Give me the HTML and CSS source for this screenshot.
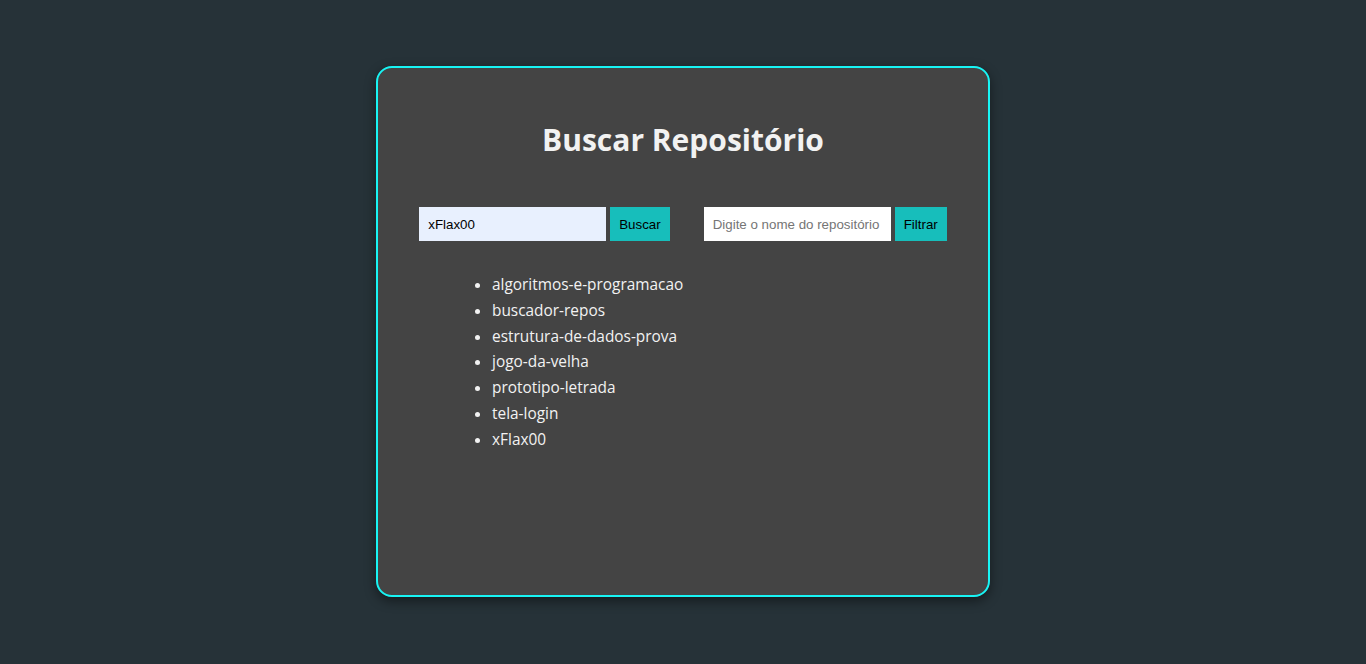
FILE: index.html
```html
<!DOCTYPE html>
<html lang="pt-BR">
<head>
<meta charset="utf-8">
<title>Buscar Repositório</title>
<link rel="stylesheet" href="styles.css">
</head>
<body>
<main class="card">
  <h1 class="title">Buscar Repositório</h1>
  <div class="controls">
    <div class="group">
      <input class="field field-filled" type="text" value="xFlax00">
      <button class="btn">Buscar</button>
    </div>
    <div class="group">
      <input class="field" type="text" placeholder="Digite o nome do repositório">
      <button class="btn">Filtrar</button>
    </div>
  </div>
  <ul class="repos">
    <li>algoritmos-e-programacao</li>
    <li>buscador-repos</li>
    <li>estrutura-de-dados-prova</li>
    <li>jogo-da-velha</li>
    <li>prototipo-letrada</li>
    <li>tela-login</li>
    <li>xFlax00</li>
  </ul>
</main>
</body>
</html>
```
FILE: styles.css
```css
html, body {
  margin: 0;
  padding: 0;
}
body {
  background: #263238;
  min-height: 664px;
  font-family: "Open Sans", "Noto Sans", sans-serif;
  display: flex;
  justify-content: center;
  align-items: flex-start;
}
.card {
  box-sizing: border-box;
  margin-top: 66px;
  width: 614px;
  height: 531px;
  background: #444444;
  border: 2px solid #18f4f4;
  border-radius: 16px;
  box-shadow: 0 4px 12px rgba(0, 0, 0, 0.45);
  padding: 52px 40px 40px;
}
.title {
  margin: 0;
  text-align: center;
  color: #f2f2f2;
  font-size: 30px;
  font-weight: 700;
  line-height: 40px;
  letter-spacing: 0;
}
.controls {
  margin-top: 47px;
  display: flex;
  justify-content: center;
  gap: 34px;
}
.group {
  display: flex;
  gap: 4px;
}
.field {
  box-sizing: border-box;
  width: 187px;
  height: 34px;
  border: none;
  padding: 0 9px;
  font-family: "Liberation Sans", Arial, sans-serif;
  font-size: 13.33px;
  color: #000;
  background: #ffffff;
  outline: none;
}
.field::placeholder {
  color: #757575;
}
.field-filled {
  background: #e8f0fe;
}
.btn {
  box-sizing: border-box;
  height: 34px;
  border: none;
  padding: 0 9px;
  background: #17bebb;
  color: #000;
  font-family: "Liberation Sans", Arial, sans-serif;
  font-size: 13.33px;
}
.repos {
  margin: 31px 0 0;
  padding-left: 74px;
  color: #f2f2f2;
  font-size: 15.4px;
  line-height: 25.8px;
}
```
